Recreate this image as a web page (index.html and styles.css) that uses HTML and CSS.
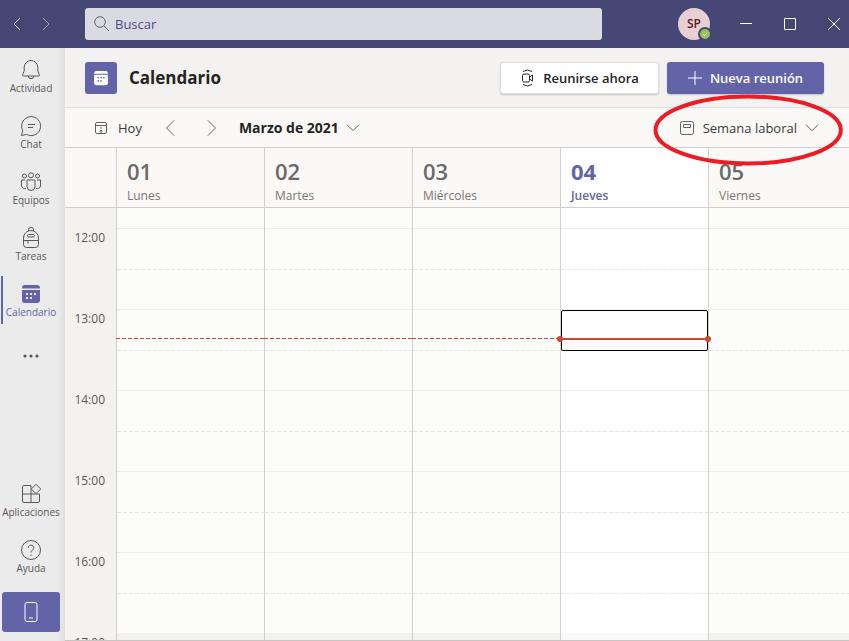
FILE: index.html
```html
<!DOCTYPE html>
<html lang="es">
<head>
<meta charset="utf-8">
<meta name="viewport" content="width=device-width, initial-scale=1">
<title>Calendario</title>
<link rel="stylesheet" href="styles.css">
</head>
<body>
<header class="titlebar">
  <nav class="history" aria-label="Historial">
    <button aria-label="Atrás"><svg width="8" height="14" viewBox="0 0 8 14"><path d="M7 1 1 7l6 6"/></svg></button>
    <button class="dim" aria-label="Adelante"><svg width="8" height="14" viewBox="0 0 8 14"><path d="m1 1 6 6-6 6"/></svg></button>
  </nav>
  <label class="search">
    <svg width="16" height="16" viewBox="0 0 16 16"><circle cx="6" cy="6" r="5.3"/><path d="m10 10 5 5"/></svg>
    <input type="search" placeholder="Buscar" aria-label="Buscar">
  </label>
  <div class="window">
    <button class="avatar" aria-label="Perfil">SP<svg class="status" width="14" height="14" viewBox="0 0 14 14"><circle cx="7" cy="7" r="6" fill="#92c353" stroke="#464775" stroke-width="2"/><path d="m5 7.200 1.500 1.400L9 5.800" fill="none" stroke="#fff"/></svg></button>
    <button class="control" aria-label="Minimizar"><svg width="12" height="12" viewBox="0 0 12 12"><path d="M0 5.500h12"/></svg></button>
    <button class="control" aria-label="Maximizar"><svg width="12" height="12" viewBox="0 0 12 12"><path d="M.5.5h11v11H.5z"/></svg></button>
    <button class="control" aria-label="Cerrar"><svg width="12" height="12" viewBox="0 0 12 12"><path d="m0 0 12 12M12 0 0 12"/></svg></button>
  </div>
</header>
<div class="shell">
  <nav class="rail" aria-label="Aplicaciones">
    <a href="#"><svg width="22" height="22" viewBox="0 0 22 22"><path d="M3.500 17q-1.500 0-.8-1.500L4.200 12V8.300a6.800 6.800 0 0 1 13.600 0V12l1.500 3.500q.7 1.500-.8 1.500ZM8.300 17a2.700 2.700 0 0 0 5.400 0"/></svg>Actividad</a>
    <a href="#"><svg width="22" height="22" viewBox="0 0 22 22"><path d="M1.500 20.500 2.700 15.500A9.500 9.500 0 1 1 6.500 19.400ZM8 9.500h7M8 12.500h5"/></svg>Chat</a>
    <a href="#"><svg width="22" height="22" viewBox="0 0 22 22"><circle cx="4.500" cy="5" r="2"/><circle cx="11" cy="4.300" r="2.500"/><circle cx="17.500" cy="5" r="2"/><path d="M7 9h8v6.500a4 4 0 0 1-8 0ZM5 9H1.500v6A3.500 3.500 0 0 0 6 17.500M17 9h3.500v6a3.500 3.500 0 0 1-4.500 2.500"/></svg>Equipos</a>
    <a href="#"><svg width="22" height="22" viewBox="0 0 22 22"><path d="M3.500 11a7.500 7.500 0 0 1 15 0v6.500a3 3 0 0 1-3 3h-9a3 3 0 0 1-3-3ZM3.500 13.500h15M8 13.500v3M8.500 4V2.800a2.500 2.500 0 0 1 5 0V4"/><rect x="7.500" y="7.500" width="7" height="2.500" rx="1.200"/></svg>Tareas</a>
    <a href="#" class="active" aria-current="page"><svg class="solid" width="22" height="22" viewBox="0 0 22 22"><path d="M2 5.500V5a3 3 0 0 1 3-3h12a3 3 0 0 1 3 3v.5ZM2 7h18v10a3 3 0 0 1-3 3H5a3 3 0 0 1-3-3Z"/><path class="dots" d="M6 10h2v2H6zM10 10h2v2h-2zM14 10h2v2h-2zM6 14h2v2H6zM10 14h2v2h-2z"/></svg>Calendario</a>
    <button class="more" aria-label="Más aplicaciones"><svg width="18" height="4" viewBox="0 0 18 4"><circle cx="3" cy="2" r="1.600"/><circle cx="9" cy="2" r="1.600"/><circle cx="15" cy="2" r="1.600"/></svg></button>
    <a href="#" class="bottom"><svg width="22" height="22" viewBox="0 0 22 22"><path d="M11 2.500H3.800A1.300 1.300 0 0 0 2.500 3.800v14.400a1.300 1.300 0 0 0 1.300 1.300h14.400a1.300 1.300 0 0 0 1.300-1.300V11h-17M11 2.500v17M16 1.300l4.700 4.700-4.700 4.700L11.300 6Z"/></svg>Aplicaciones</a>
    <a href="#"><svg width="22" height="22" viewBox="0 0 22 22"><circle cx="11" cy="11" r="9.500"/><path d="M8.300 8.800a2.700 2.700 0 1 1 4.500 2c-1 .9-1.800 1.300-1.800 2.700M11 15.500V17"/></svg>Ayuda</a>
    <button class="mobile" aria-label="Aplicación móvil"><svg width="14" height="20" viewBox="0 0 14 20"><rect x="1" y=".5" width="12" height="19" rx="2"/><path d="M5 16h4"/></svg></button>
  </nav>
  <main>
    <div class="heading">
      <span class="badge"><svg width="16" height="16" viewBox="0 0 22 22"><path fill="#fff" d="M1.500 5V4A3 3 0 0 1 4.500 1.500h13a3 3 0 0 1 3 2.500v1ZM1.500 6.500h19V18a3 3 0 0 1-3 3h-13a3 3 0 0 1-3-3Z"/><path fill="#6264a7" d="M6 9.500h2v2H6zM10 9.500h2v2h-2zM14 9.500h2v2h-2zM6 14h2v2H6zM10 14h2v2h-2z"/></svg></span>
      <h1>Calendario</h1>
      <button class="meet"><svg width="16" height="18" viewBox="0 0 16 18"><rect x="2.500" y="5" width="7" height="8" rx="1.500"/><path d="m9.500 8 3-2v6l-3-2M3 2.500q4.500-3 9 0M3 15.500q4.500 3 9 0"/></svg>Reunirse ahora</button>
      <button class="new"><svg width="14" height="14" viewBox="0 0 14 14"><path d="M7 0v14M0 7h14"/></svg>Nueva reunión</button>
    </div>
    <div class="toolbar">
      <button class="today"><svg width="14" height="14" viewBox="0 0 14 14"><rect x="1.500" y="1.500" width="11" height="11" rx="1.500"/><path d="M1.500 4.500h11M7 6v1.500M7 9v3.500M5.500 10.500 7 9l1.500 1.500"/></svg>Hoy</button>
      <button class="step" aria-label="Semana anterior"><svg width="10" height="16" viewBox="0 0 10 16"><path d="M9 .5 1.500 8 9 15.500"/></svg></button>
      <button class="step" aria-label="Semana siguiente"><svg width="10" height="16" viewBox="0 0 10 16"><path d="M1 .5 8.500 8 1 15.500"/></svg></button>
      <button class="month">Marzo de 2021<svg width="14" height="8" viewBox="0 0 14 8"><path d="m1 .7 6 6 6-6"/></svg></button>
      <button class="view"><svg width="16" height="16" viewBox="0 0 16 16"><rect x="1.500" y="1.500" width="13" height="13" rx="2"/><path d="M4.500 4.500h7v3h-7z"/></svg>Semana laboral<svg width="14" height="8" viewBox="0 0 14 8"><path d="m1 .7 6 6 6-6"/></svg>
        <svg class="ring" viewBox="0 0 190 72" preserveAspectRatio="none"><ellipse cx="95" cy="36" rx="92.500" ry="33.500"/></svg></button>
    </div>
    <div class="days">
      <div></div>
      <div><b>01</b>Lunes</div>
      <div><b>02</b>Martes</div>
      <div><b>03</b>Miércoles</div>
      <div class="current"><b>04</b>Jueves</div>
      <div><b>05</b>Viernes</div>
    </div>
    <div class="grid">
      <div class="hours"><time>12:00</time><time>13:00</time><time>14:00</time><time>15:00</time><time>16:00</time><time>17:00</time></div>
      <div class="day past"></div>
      <div class="day past"></div>
      <div class="day past"></div>
      <div class="day current"><button class="slot" aria-label="Jueves 13:00"></button><i class="now"></i></div>
      <div class="day"></div>
    </div>
  </main>
</div>
</body>
</html>
```
FILE: styles.css
```css
* { box-sizing: border-box; }
body {
  margin: 0;
  height: 100vh;
  display: flex;
  flex-direction: column;
  overflow: hidden;
  font: 13px/20px "Open Sans", "Noto Sans", sans-serif;
  color: #252423;
  background: #f3f2f1;
}
button {
  font: inherit;
  color: inherit;
  background: none;
  border: 0;
  padding: 0;
  display: flex;
  align-items: center;
  justify-content: center;
}
svg { fill: none; stroke: currentColor; flex: none; }

.titlebar {
  height: 48px;
  flex: none;
  display: flex;
  align-items: center;
  background: #464775;
  color: #fff;
}
.history { width: 85px; display: flex; padding-left: 6px; gap: 8px; }
.history button { width: 21px; height: 32px; }
.history .dim { opacity: .5; }
.search {
  flex: 1;
  height: 32px;
  display: flex;
  align-items: center;
  gap: 5px;
  padding-left: 9px;
  border-radius: 3px;
  background: #dadae3;
  color: #616161;
}
.search input {
  flex: 1;
  min-width: 0;
  border: 0;
  padding: 0;
  background: none;
  font: inherit;
  outline: 0;
}
.search input::placeholder { color: #494b83; opacity: 1; }
.window { display: flex; align-items: center; padding-left: 76px; }
.avatar {
  position: relative;
  width: 32px;
  height: 32px;
  margin-right: 14px;
  border-radius: 50%;
  background: #e8cfd2;
  color: #5c1a24;
  font-size: 12px;
  font-weight: 600;
}
.status { position: absolute; right: -2px; bottom: -1px; }
.control { width: 44px; height: 32px; }
.control:last-child { width: 37px; padding-left: 7px; justify-content: flex-start; padding-left: 16px; }

.shell { flex: 1; min-height: 0; display: flex; }
.rail {
  width: 65px;
  flex: none;
  display: flex;
  flex-direction: column;
  padding: 4px 3px 9px 0;
  background: linear-gradient(to right, #ebebeb 57px, #e0e0e0);
}
.rail a {
  height: 48px;
  margin-bottom: 8px;
  flex: none;
  display: flex;
  flex-direction: column;
  align-items: center;
  padding-top: 7px;
  font-size: 10px;
  line-height: 14px;
  color: #5a5857;
  text-decoration: none;
}
.rail .active { color: #6264a7; box-shadow: inset 1px 0 #ebebeb, inset 3px 0 #6264a7; }
.solid path { fill: currentColor; stroke: none; }
.solid .dots { fill: #ebebeb; }
.more { height: 48px; color: #5a5857; }
.more svg { fill: currentColor; stroke: none; }
.rail .bottom { margin-top: auto; }
.mobile {
  height: 40px;
  flex: none;
  margin: 4px 2px 0;
  border-radius: 3px;
  background: #6264a7;
  color: #fff;
}

main { flex: 1; min-width: 0; display: flex; flex-direction: column; }
.heading {
  height: 60px;
  flex: none;
  display: flex;
  align-items: center;
  padding: 0 25px 0 20px;
  border-bottom: 1px solid #e1dfdd;
}
.badge {
  width: 32px;
  height: 32px;
  display: grid;
  place-items: center;
  border-radius: 3px;
  background: #6264a7;
}
.badge svg { stroke: none; }
h1 { margin: 0 auto 0 12px; font-size: 17px; line-height: 22px; font-weight: 700; }
.meet, .new {
  height: 32px;
  border-radius: 3px;
  font-weight: 600;
  box-shadow: 0 1px 2px #0003;
}
.meet { width: 159px; gap: 7px; background: #fff; border: 1px solid #e1dfdd; }
.new { width: 157px; gap: 8px; margin-left: 8px; background: #6264a7; color: #fff; }

.toolbar {
  height: 39px;
  flex: none;
  display: flex;
  align-items: center;
  padding: 0 30px 0 29px;
  background: #faf9f8;
  color: #3b3a39;
}
.toolbar svg { color: #616161; }
.today { gap: 10px; margin-right: 23px; }
.step { width: 10px; margin-right: 32px; }
.month { gap: 7px; margin-left: -10px; font-size: 14px; font-weight: 700; color: #252423; }
.view { position: relative; gap: 8px; margin-left: auto; }
.toolbar .ring {
  position: absolute;
  left: -26px;
  top: -24px;
  width: calc(100% + 50px);
  height: 72px;
  color: #ed1c24;
  stroke-width: 4;
  z-index: 2;
  pointer-events: none;
}

.days, .grid { display: grid; grid-template-columns: 51px repeat(4, 148fr) 141fr; }
.days {
  height: 61px;
  flex: none;
  border: solid #d2d0ce;
  border-width: 1px 0;
  background: #faf9f8;
}
.days div { padding: 8px 0 0 10px; font-size: 12px; line-height: 20px; color: #797775; }
.days div + div { border-left: 1px solid #d2d0ce; }
.days b { display: block; font-size: 22px; line-height: 30px; font-weight: 600; color: #6b6967; }
.days .current { background: #fff; color: #6264a7; font-weight: 600; }
.days .current b { color: #6264a7; font-weight: 700; }

.grid { flex: 1; min-height: 0; overflow: hidden; border-bottom: 1px solid #c8c6c4; }
.hours { padding-top: 20px; height: 0; font-size: 12px; color: #5a5857; }
.hours time { display: block; height: 81px; padding-right: 11px; text-align: right; }
.day {
  --base: #fcfcfa;
  --after-hours: #f3f2f1;
  position: relative;
  border-left: 1px solid #d2d0ce;
  background:
    linear-gradient(to bottom, #0000 425px, var(--after-hours) 425px),
    repeating-linear-gradient(to bottom, #0000 0 20px, #efeeed 20px 21px, #0000 21px 81px),
    repeating-linear-gradient(to right, #0000 0 4px, var(--base) 4px 6px),
    repeating-linear-gradient(to bottom, #0000 0 61px, #e6e5e4 61px 62px, #0000 62px 81px),
    var(--base);
}
.day.current { --base: #fff; --after-hours: #faf9f8; z-index: 1; }
.past::after {
  content: "";
  position: absolute;
  top: 130px;
  left: -1px;
  right: 0;
  height: 1px;
  background: linear-gradient(to right, #cc4a31 4px, #0000 4px) 0 0 / 6px 1px repeat-x;
}
.slot {
  position: absolute;
  top: 102px;
  left: 0;
  width: 100%;
  height: 41px;
  border: 1px solid #000;
  border-radius: 2px;
}
.now {
  position: absolute;
  top: 130px;
  left: 0;
  right: 0;
  height: 2px;
  background: #cc4a31;
}
.now::before, .now::after {
  content: "";
  position: absolute;
  top: -2px;
  left: -4px;
  width: 6px;
  height: 6px;
  border-radius: 50%;
  background: #cc4a31;
}
.now::after { left: auto; right: -3px; }
```
